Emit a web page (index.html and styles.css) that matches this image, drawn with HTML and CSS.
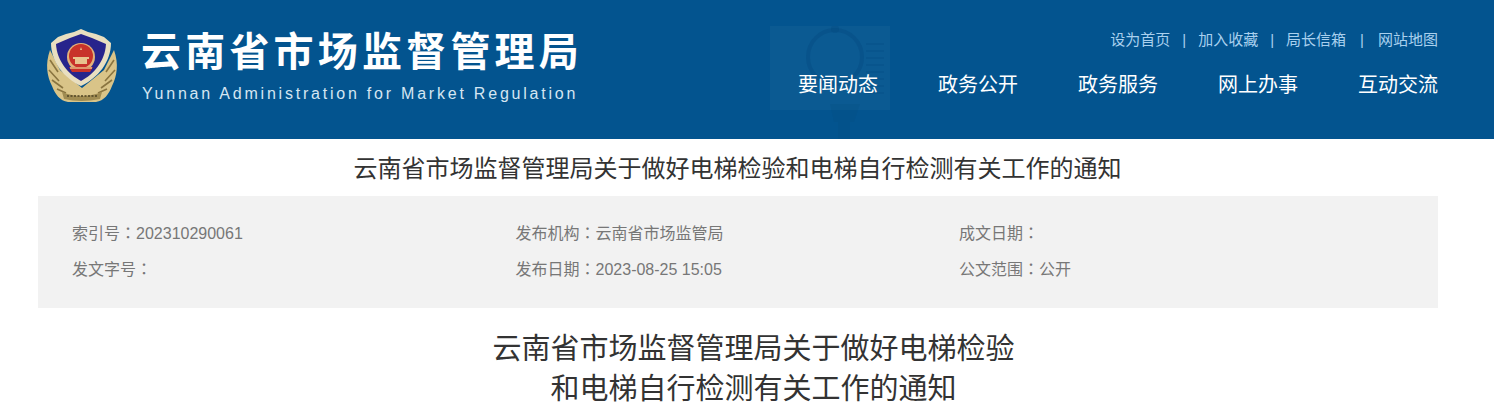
FILE: index.html
```html
<!doctype html>
<html lang="zh">
    <head>
        <meta charset="utf-8">
        <title>云南省市场监督管理局</title>
        <link rel="stylesheet" href="styles.css">
    </head>
    <body>
        <header class="cabecera">
            <div class="marca">
                <svg class="emblema" viewBox="0 0 76 80" width="76" height="80">
                    <path d="M6 24 C1 38 3 50 8 60 C11 68 16 75 24 76 H52 C60 75 65 68 68 60 C73 50 75 38 70 24 L60 44 L38 62 L16 44 Z" fill="#d9c488"/>
                    <path d="M6 34 L14 46 M5 44 L15 55 M8 54 L19 62 M13 63 L22 67 M70 34 L62 46 M71 44 L61 55 M68 54 L57 62 M63 63 L54 67" stroke="#8a7540" stroke-width="1.6" fill="none"/>
                    <path d="M37 3 L44 6 L52 8 L60 11 L67 17 C67 36 54 52 37 60 C20 52 7 36 7 17 L14 11 L22 8 L30 6 Z" fill="#e9dfc0"/>
                    <path d="M37 8 L48 12 L62 18 C61 35 50 48 37 55 C24 48 13 35 12 18 L26 12 Z" fill="#27248c"/>
                    <circle cx="37" cy="31" r="14" fill="#e2b27a"/>
                    <circle cx="37" cy="30" r="12" fill="#c8322a"/>
                    <path d="M37 21 L38 24 H36 Z M31 33 H43 V38 H31 Z M29 31 H45 V33 H29 Z" fill="#e8c48e"/>
                    <path d="M25 41 H49 L46 46 H28 Z" fill="#c8322a"/>
                    <path d="M26 42 H48" stroke="#e6bc86" stroke-width="1.5"/>
                    <path d="M18 66 Q37 74 58 66 L56 73 Q37 77 20 73 Z" fill="#a08c52"/>
                    <path d="M23 70 H53" stroke="#4d4325" stroke-width="1.6" stroke-dasharray="2 1.5"/>
                </svg>
                <div class="marca-texto">
                    <div class="marca-nombre">云南省市场监督管理局</div>
                    <div class="marca-en">Yunnan Administration for Market Regulation</div>
                </div>
            </div>
            <svg class="marca-agua" viewBox="0 0 120 113" width="120" height="113">
                <rect x="0" y="0" width="120" height="84" fill="#fff" opacity="0.035"/>
                <path d="M96 18 H114 M96 25 H114 M96 32 H114 M96 39 H114 M96 46 H114 M96 53 H114 M96 60 H114 M96 67 H114" stroke="#03497f" stroke-width="2" opacity="0.25"/>
                <circle cx="65" cy="31" r="27" fill="none" stroke="#03497f" stroke-width="4" opacity="0.35"/>
                <circle cx="65" cy="3" r="4" fill="#03497f" opacity="0.3"/>
                <path d="M60 78 H90 L84 96 H80 V113 H68 V96 H64 Z" fill="#03497f" opacity="0.2"/>
            </svg>
            <div class="cabecera-der">
                <ul class="enlaces">
                    <li>设为首页</li>
                    <li>|</li>
                    <li>加入收藏</li>
                    <li>|</li>
                    <li>局长信箱</li>
                    <li class="sep-ancho">|</li>
                    <li>网站地图</li>
                </ul>
                <nav class="menu">
                    <a>要闻动态</a>
                    <a>政务公开</a>
                    <a>政务服务</a>
                    <a>网上办事</a>
                    <a>互动交流</a>
                </nav>
            </div>
        </header>
        <main class="contenido">
            <h2 class="titulo-top">云南省市场监督管理局关于做好电梯检验和电梯自行检测有关工作的通知</h2>
            <div class="info">
                <div>索引号<span class="dp" lang="zh-TW">：</span>202310290061</div>
                <div>发布机构<span class="dp" lang="zh-TW">：</span>云南省市场监管局</div>
                <div>成文日期<span class="dp" lang="zh-TW">：</span></div>
                <div>发文字号<span class="dp" lang="zh-TW">：</span></div>
                <div>发布日期<span class="dp" lang="zh-TW">：</span>2023-08-25 15:05</div>
                <div>公文范围<span class="dp" lang="zh-TW">：</span>公开</div>
            </div>
            <h1 class="titulo">云南省市场监督管理局关于做好电梯检验<br>和电梯自行检测有关工作的通知</h1>
        </main>
    </body>
</html>
```

FILE: styles.css
```css
* {
    margin: 0;
    padding: 0;
}
html,
body {
    height: 100%;
    overflow: hidden;
}
body {
    background: #fff;
    font-family: "Liberation Sans", "Noto Sans CJK SC", sans-serif;
    color: #333;
}
.cabecera {
    height: 139px;
    background: #03548f;
    box-sizing: border-box;
    padding: 0 56px 0 44px;
    display: flex;
    justify-content: space-between;
    position: relative;
}
.marca {
    display: flex;
    align-items: flex-start;
    gap: 21px;
    padding-top: 26px;
}
.marca-nombre {
    font-size: 40px;
    line-height: 48px;
    font-weight: bold;
    letter-spacing: 4.2px;
    color: #fff;
    margin-top: 2px;
}
.marca-en {
    font-size: 16px;
    line-height: 20px;
    letter-spacing: 2.78px;
    color: #d5e6f2;
    margin-left: 1px;
    margin-top: 8px;
}
.marca-agua {
    position: absolute;
    left: 770px;
    top: 26px;
}
.cabecera-der {
    position: relative;
    display: flex;
    flex-direction: column;
    align-items: flex-end;
    padding-top: 30px;
}
.enlaces {
    list-style: none;
    display: flex;
    gap: 12px;
    font-size: 15px;
    line-height: 20px;
    color: #a9d0ee;
}
.sep-ancho {
    margin: 0 2px;
}
.menu {
    display: flex;
    gap: 60px;
    margin-top: 21px;
    font-size: 20px;
    line-height: 28px;
    color: #fff;
}
.contenido {
    padding: 0 56px 0 38px;
}
.titulo-top {
    font-size: 24px;
    font-weight: normal;
    line-height: 32px;
    text-align: center;
    padding: 14px 1px 0 0;
    color: #333;
}
.info {
    margin-top: 11px;
    height: 112px;
    box-sizing: border-box;
    padding: 20px 0 0 34px;
    background: #f2f2f2;
    display: grid;
    grid-template-columns: repeat(3, 443.5px);
    grid-auto-rows: 36px;
    font-size: 16px;
    line-height: 36px;
    color: #777;
}
.dp {
    font-family: "Noto Sans CJK TC", sans-serif;
    line-height: 1;
}
.titulo {
    font-size: 29px;
    font-weight: normal;
    line-height: 40px;
    text-align: center;
    margin-top: 21px;
    padding-left: 31px;
    color: #333;
}
```
